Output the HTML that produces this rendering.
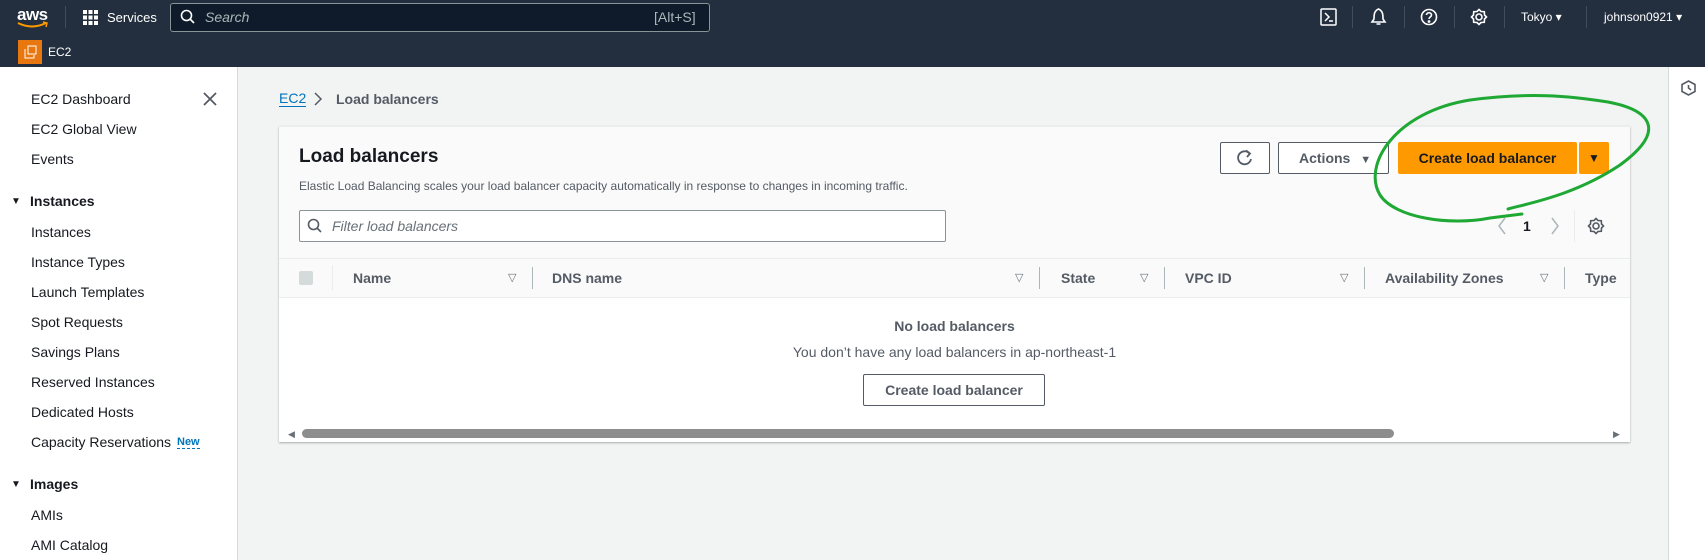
<!DOCTYPE html>
<html><head><meta charset="utf-8"><style>
*{box-sizing:border-box;margin:0;padding:0}
body{width:1705px;height:560px;overflow:hidden;background:#f2f3f3;font-family:"Liberation Sans",sans-serif;position:relative;color:#16191f}
.a{position:absolute;white-space:nowrap}
#nav{left:0;top:0;width:1705px;height:67px;background:#232f3e}
.w{color:#fff;font-size:13px}
#side{left:0;top:67px;width:238px;height:493px;background:#fff;border-right:1px solid #d5dbdb}
.si{font-size:14px;color:#16191f;left:31px}
.sh{font-size:14px;font-weight:bold;left:30px}
.tri{font-size:10px;left:11px}
#panel{left:279px;top:126px;width:1351px;height:316px;background:#fff;box-shadow:0 1px 2px rgba(0,0,0,.3);border-top:1px solid #eaeded}
.btn{border:1px solid #545b64;border-radius:2px;background:#fff;font-weight:bold;font-size:14px;color:#545b64;text-align:center}
.th{font-size:14px;font-weight:bold;color:#545b64;top:270px}
.fv{font-size:11px;color:#687078;top:271px}
.dv{width:1px;height:22px;background:#aab7b8;top:267px}
</style></head><body>
<div class="a" id="nav"></div>
<div class="a w" style="left:17px;top:5px;font-size:17px;font-weight:bold;letter-spacing:-0.5px">aws</div>
<svg class="a" style="left:16px;top:21px" width="34" height="8"><path d="M2 2 Q16 9 30 2" stroke="#ff9900" stroke-width="2" fill="none"/><path d="M27 1 L31 2 L30 6" stroke="#ff9900" stroke-width="1.5" fill="none"/></svg>
<div class="a" style="left:65px;top:6px;width:1px;height:22px;background:#414d5c"></div>
<svg class="a" style="left:83px;top:10px" width="15" height="15" fill="#fff"><rect x="0" y="0" width="4" height="4"/><rect x="5.5" y="0" width="4" height="4"/><rect x="11" y="0" width="4" height="4"/><rect x="0" y="5.5" width="4" height="4"/><rect x="5.5" y="5.5" width="4" height="4"/><rect x="11" y="5.5" width="4" height="4"/><rect x="0" y="11" width="4" height="4"/><rect x="5.5" y="11" width="4" height="4"/><rect x="11" y="11" width="4" height="4"/></svg>
<div class="a w" style="left:107px;top:10px;font-size:13px">Services</div>
<div class="a" style="left:170px;top:3px;width:540px;height:29px;background:#0f1b2a;border:1px solid #879596;border-radius:3px"></div>
<svg class="a" style="left:180px;top:9px" width="16" height="16"><circle cx="6.5" cy="6.5" r="5" stroke="#fff" stroke-width="1.6" fill="none"/><path d="M10 10 L14 14" stroke="#fff" stroke-width="1.6"/></svg>
<div class="a" style="left:205px;top:9px;font-size:14px;font-style:italic;color:#aab7b8">Search</div>
<div class="a" style="left:654px;top:9px;font-size:14px;color:#aab7b8">[Alt+S]</div>
<div class="a" style="left:18px;top:40px;width:24px;height:24px;background:#e8770f"></div>
<svg class="a" style="left:18px;top:40px" width="24" height="24" stroke="#fff" fill="none" stroke-width="1"><rect x="10" y="6" width="8" height="8"/><path d="M7 9 v9 h9 v-3"/></svg>
<div class="a w" style="left:48px;top:45px;font-size:12px">EC2</div>
<svg class="a" style="left:1320px;top:8px" width="18" height="19" stroke="#fff" fill="none" stroke-width="1.5"><rect x="1" y="1" width="15" height="16" rx="1"/><path d="M5 5 L9 9 L5 13 M9 13 h4"/></svg>
<div class="a" style="left:1352px;top:6px;width:1px;height:22px;background:#414d5c"></div>
<svg class="a" style="left:1370px;top:7px" width="17" height="19" stroke="#fff" fill="none" stroke-width="1.6"><path d="M8.5 2 C4 4 4 8 4 12 L2 15 H15 L13 12 C13 8 13 4 8.5 2 Z M6.5 17 H10.5"/></svg>
<div class="a" style="left:1404px;top:6px;width:1px;height:22px;background:#414d5c"></div>
<svg class="a" style="left:1420px;top:8px" width="18" height="18" stroke="#fff" fill="none" stroke-width="1.6"><circle cx="9" cy="9" r="7.5"/><path d="M6.5 7 C6.5 4 11.5 4 11.5 7 C11.5 9 9 9 9 11"/><circle cx="9" cy="13.5" r=".6" fill="#fff"/></svg>
<div class="a" style="left:1454px;top:6px;width:1px;height:22px;background:#414d5c"></div>
<svg class="a" style="left:1470px;top:8px" width="18" height="18" stroke="#fff" fill="none" stroke-width="1.6"><circle cx="9" cy="9" r="3"/><path d="M9 1.5 L11 3.5 L14.3 3.7 L14.5 7 L16.5 9 L14.5 11 L14.3 14.3 L11 14.5 L9 16.5 L7 14.5 L3.7 14.3 L3.5 11 L1.5 9 L3.5 7 L3.7 3.7 L7 3.5 Z"/></svg>
<div class="a" style="left:1504px;top:6px;width:1px;height:22px;background:#414d5c"></div>
<div class="a w" style="left:1521px;top:10px;font-size:12px">Tokyo ▾</div>
<div class="a" style="left:1586px;top:6px;width:1px;height:22px;background:#414d5c"></div>
<div class="a w" style="left:1604px;top:10px;font-size:12px">johnson0921 ▾</div>

<div class="a" id="side"></div>
<div class="a si" style="top:91px">EC2 Dashboard</div>
<svg class="a" style="left:203px;top:92px" width="14" height="14" stroke="#545b64" stroke-width="1.8"><path d="M1 1 L13 13 M13 1 L1 13"/></svg>
<div class="a si" style="top:121px">EC2 Global View</div>
<div class="a si" style="top:151px">Events</div>
<div class="a tri" style="top:196px">▼</div><div class="a sh" style="top:193px">Instances</div>
<div class="a si" style="top:224px">Instances</div>
<div class="a si" style="top:254px">Instance Types</div>
<div class="a si" style="top:284px">Launch Templates</div>
<div class="a si" style="top:314px">Spot Requests</div>
<div class="a si" style="top:344px">Savings Plans</div>
<div class="a si" style="top:374px">Reserved Instances</div>
<div class="a si" style="top:404px">Dedicated Hosts</div>
<div class="a si" style="top:434px">Capacity Reservations</div>
<div class="a" style="left:177px;top:436px;font-size:11px;font-weight:bold;color:#0073bb;border-bottom:1px dashed #0073bb">New</div>
<div class="a tri" style="top:479px">▼</div><div class="a sh" style="top:476px">Images</div>
<div class="a si" style="top:507px">AMIs</div>
<div class="a si" style="top:537px">AMI Catalog</div>

<div class="a" style="left:1668px;top:67px;width:1px;height:493px;background:#d5dbdb"></div>
<div class="a" style="left:1669px;top:67px;width:36px;height:493px;background:#fff"></div>
<svg class="a" style="left:1681px;top:80px" width="15" height="16" stroke="#545b64" fill="none" stroke-width="1.6"><path d="M7.5 1 L14 4.5 V11.5 L7.5 15 L1 11.5 V4.5 Z"/><path d="M7.5 5 V8 L10 10"/></svg>

<div class="a" style="left:279px;top:91px;font-size:14px;color:#0073bb;border-bottom:1px solid #0073bb;line-height:15px">EC2</div>
<svg class="a" style="left:313px;top:92px" width="10" height="14" stroke="#545b64" fill="none" stroke-width="1.5"><path d="M2 1 L8 7 L2 13"/></svg>
<div class="a" style="left:336px;top:91px;font-size:14px;font-weight:bold;color:#545b64">Load balancers</div>

<div class="a" id="panel"></div>
<div class="a" style="left:279px;top:127px;width:1351px;height:131px;background:#fafafa"></div>
<div class="a" style="left:299px;top:146px;font-size:19px;font-weight:bold">Load balancers</div>
<div class="a" style="left:299px;top:179px;font-size:12px;color:#545b64">Elastic Load Balancing scales your load balancer capacity automatically in response to changes in incoming traffic.</div>
<div class="a" style="left:299px;top:210px;width:647px;height:32px;background:#fff;border:1px solid #879596;border-radius:2px"></div>
<svg class="a" style="left:307px;top:218px" width="16" height="16"><circle cx="6.5" cy="6.5" r="5" stroke="#545b64" stroke-width="1.6" fill="none"/><path d="M10 10 L14 14" stroke="#545b64" stroke-width="1.6"/></svg>
<div class="a" style="left:332px;top:218px;font-size:14px;font-style:italic;color:#687078">Filter load balancers</div>
<div class="a btn" style="left:1220px;top:142px;width:50px;height:32px"></div>
<svg class="a" style="left:1236px;top:149px" width="18" height="18" stroke="#545b64" fill="none" stroke-width="1.8"><path d="M13.5 4.5 A6.5 6.5 0 1 0 15 10"/><path d="M10 1.5 L14 4.5 L11 8"/></svg>
<div class="a btn" style="left:1278px;top:142px;width:111px;height:32px;line-height:30px;text-align:left;padding-left:20px">Actions <span style="font-size:11px;margin-left:6px">▼</span></div>
<div class="a" style="left:1398px;top:142px;width:179px;height:32px;background:#ff9900;border-radius:2px;font-size:14px;font-weight:bold;color:#16191f;text-align:center;line-height:32px">Create load balancer</div>
<div class="a" style="left:1579px;top:142px;width:30px;height:32px;background:#ff9900;border-radius:2px;font-size:12px;text-align:center;line-height:32px">▼</div>
<svg class="a" style="left:1497px;top:217px" width="10" height="18" stroke="#aab7b8" fill="none" stroke-width="1.5"><path d="M8 1 L2 9 L8 17"/></svg>
<div class="a" style="left:1523px;top:218px;font-size:14px;font-weight:bold">1</div>
<svg class="a" style="left:1550px;top:217px" width="10" height="18" stroke="#aab7b8" fill="none" stroke-width="1.5"><path d="M2 1 L8 9 L2 17"/></svg>
<div class="a" style="left:1574px;top:210px;width:1px;height:32px;background:#eaeded"></div>
<svg class="a" style="left:1587px;top:217px" width="18" height="18" stroke="#545b64" fill="none" stroke-width="1.6"><circle cx="9" cy="9" r="3"/><path d="M9 1.5 L11 3.5 L14.3 3.7 L14.5 7 L16.5 9 L14.5 11 L14.3 14.3 L11 14.5 L9 16.5 L7 14.5 L3.7 14.3 L3.5 11 L1.5 9 L3.5 7 L3.7 3.7 L7 3.5 Z"/></svg>

<div class="a" style="left:279px;top:258px;width:1351px;height:40px;background:#fafafa;border-top:1px solid #eaeded;border-bottom:1px solid #eaeded"></div>
<div class="a" style="left:299px;top:271px;width:14px;height:14px;background:#d5dbdb;border-radius:2px"></div>
<div class="a" style="left:332px;top:265px;width:1px;height:26px;background:#eaeded"></div>
<div class="a th" style="left:353px">Name</div><div class="a fv" style="left:508px">▽</div><div class="a dv" style="left:532px"></div>
<div class="a th" style="left:552px">DNS name</div><div class="a fv" style="left:1015px">▽</div><div class="a dv" style="left:1039px"></div>
<div class="a th" style="left:1061px">State</div><div class="a fv" style="left:1140px">▽</div><div class="a dv" style="left:1164px"></div>
<div class="a th" style="left:1185px">VPC ID</div><div class="a fv" style="left:1340px">▽</div><div class="a dv" style="left:1364px"></div>
<div class="a th" style="left:1385px">Availability Zones</div><div class="a fv" style="left:1540px">▽</div><div class="a dv" style="left:1564px"></div>
<div class="a th" style="left:1585px">Type</div>

<div class="a" style="left:279px;top:318px;width:1351px;text-align:center;font-size:14px;font-weight:bold;color:#545b64">No load balancers</div>
<div class="a" style="left:279px;top:344px;width:1351px;text-align:center;font-size:14px;color:#545b64">You don’t have any load balancers in ap-northeast-1</div>
<div class="a btn" style="left:863px;top:374px;width:182px;height:32px;line-height:30px;color:#545b64">Create load balancer</div>
<div class="a" style="left:288px;top:429px;font-size:9px;color:#687078">◀</div>
<div class="a" style="left:1613px;top:429px;font-size:9px;color:#687078">▶</div>
<div class="a" style="left:302px;top:429px;width:1092px;height:9px;background:#8d8d8d;border-radius:5px"></div>

<svg class="a" style="left:0;top:0" width="1705" height="560"><path d="M1508 209 C1530 203 1575 195 1620 165 C1668 130 1650 110 1608 102 C1570 96 1530 92 1470 100 C1395 112 1362 165 1380 195 C1395 218 1450 226 1490 218 L1522 214" stroke="#1fa834" stroke-width="3" fill="none" stroke-linecap="round"/></svg>
</body></html>
